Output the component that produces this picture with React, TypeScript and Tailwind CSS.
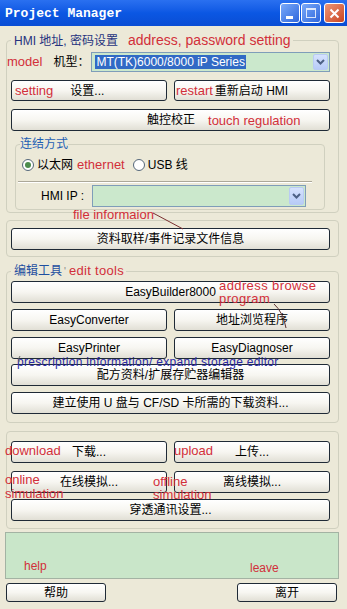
import React from "react";

const FONT = "font-['Liberation_Sans','Noto_Sans_CJK_SC',sans-serif]";
const RED = "text-[#d22f3a]";

function Btn({ children, className = "" }: { children?: React.ReactNode; className?: string }) {
  return (
    <div
      className={`flex items-center rounded-[3px] border border-[#1f2a36] bg-linear-to-b from-[#ffffff] via-[#f7f6f1] to-[#e1dfd5] text-[12px] leading-none text-black ${className}`}
    >
      {children}
    </div>
  );
}

function Chevron() {
  return (
    <svg width="9" height="6" viewBox="0 0 9 6">
      <path d="M1 1 L4.5 4.5 L8 1" fill="none" stroke="#4d6185" strokeWidth="2" />
    </svg>
  );
}

function Combo({ className = "", children }: { className?: string; children?: React.ReactNode }) {
  return (
    <div className={`flex items-stretch border border-[#7f9db9] bg-[#cbe8cc] p-[1px] ${className}`}>
      <div className="flex flex-1 items-center">{children}</div>
      <div className="flex w-[15px] items-center justify-center rounded-[2px] border border-[#b9cbf3] bg-linear-to-b from-[#d6e2fd] to-[#b7cbf7]">
        <Chevron />
      </div>
    </div>
  );
}

function Radio({ checked = false, className = "" }: { checked?: boolean; className?: string }) {
  return (
    <span
      className={`flex h-[12px] w-[12px] shrink-0 items-center justify-center rounded-full border border-[#55677a] bg-white ${className}`}
    >
      {checked && <span className="h-[6px] w-[6px] rounded-full bg-[#4c8c4c]" />}
    </span>
  );
}

function TitleBar() {
  return (
    <div className="flex h-[26px] items-center bg-linear-to-b from-[#2a70f0] via-[#0b57e3] to-[#0a4dd4] pl-[5px] pr-[2px]">
      <span className="font-['Liberation_Mono',monospace] text-[13px] font-bold leading-none text-white">
        Project Manager
      </span>
      <div className="ml-auto flex items-center">
        <div className="flex h-[20px] w-[20px] items-end justify-start rounded-[3px] border border-white bg-linear-to-br from-[#7aa9f9] to-[#2f66dc] pb-[3px] pl-[5px]">
          <span className="h-[3px] w-[7px] bg-white" />
        </div>
        <div className="ml-[1px] flex h-[20px] w-[20px] items-center justify-center rounded-[3px] border border-white bg-linear-to-br from-[#7aa9f9] to-[#2f66dc]">
          <span className="h-[10px] w-[10px] border border-t-[2px] border-white/80" />
        </div>
        <div className="ml-[3px] flex h-[20px] w-[21px] items-center justify-center rounded-[3px] border border-white bg-linear-to-br from-[#ec9576] to-[#c9431f]">
          <svg width="11" height="11" viewBox="0 0 11 11">
            <path d="M1.5 1.5 L9.5 9.5 M9.5 1.5 L1.5 9.5" stroke="white" strokeWidth="2" />
          </svg>
        </div>
      </div>
    </div>
  );
}

export default function App() {
  return (
    <div className={`relative h-[609px] w-[347px] overflow-hidden bg-[#ece9d8] ${FONT}`}>
      <TitleBar />
      <div className="flex flex-col pl-[6px] pr-[8px] pt-[6px]">
        {/* Group 1 */}
        <fieldset className="rounded-[4px] border border-[#d0d0bf] pb-[2px] pl-[4px] pr-[8px]">
          <legend className="pl-[3px] pr-[2px] text-[12px] leading-[16px]">
            <span className="text-[#26337e]">HMI 地址, 密码设置</span>
            <span className={`ml-[10px] text-[14px] ${RED}`}>address, password setting</span>
          </legend>
          <div className="mt-[3px] flex h-[20px] items-center">
            <span className={`-ml-[4px] text-[13px] ${RED}`}>model</span>
            <span className="ml-[11px] text-[12px] text-black">机型：</span>
            <Combo className="ml-[2px] h-[20px] flex-1">
              <span className="ml-[2px] bg-[#316ac5] px-[1px] text-[12px] leading-[14px] text-white">
                MT(TK)6000/8000 iP Series
              </span>
            </Combo>
          </div>
          <div className="mt-[8px] grid h-[21px] grid-cols-2 gap-[7px]">
            <Btn className="justify-start pl-[3px]">
              <span className={`text-[13px] ${RED}`}>setting</span>
              <span className="ml-[17px]">设置...</span>
            </Btn>
            <Btn className="justify-start pl-[1px]">
              <span className={`text-[13px] ${RED}`}>restart</span>
              <span className="ml-[2px]">重新启动 HMI</span>
            </Btn>
          </div>
          <Btn className="mt-[8px] h-[22px] justify-start pl-[135px]">
            <span>触控校正</span>
            <span className={`ml-[13px] text-[13px] ${RED}`}>touch regulation</span>
          </Btn>
          {/* Connection group */}
          <fieldset className="ml-[4px] mr-[5px] mt-[5px] rounded-[4px] border border-[#d0d0bf] pb-[2px] pl-[4px] pr-[4px]">
            <legend className="text-[12px] leading-[16px] text-[#1f5fb4]">连结方式</legend>
            <div className="mt-[5px] flex h-[16px] items-center text-[12px] text-black">
              <Radio checked className="ml-[2px]" />
              <span className="ml-[3px]">以太网</span>
              <span className={`ml-[4px] text-[13px] ${RED}`}>ethernet</span>
              <Radio className="ml-[8px]" />
              <span className="ml-[3px]">USB 线</span>
            </div>
            <div className="-ml-[2px] mr-[8px] mt-[8px] h-[2px] border-b border-t border-b-white border-t-[#aca899]" />
            <div className="mt-[2px] flex h-[22px] items-center">
              <span className="ml-[21px] w-[51px] text-[12px] text-black">HMI IP :</span>
              <Combo className="h-[22px] w-[214px]" />
            </div>
          </fieldset>
        </fieldset>

        {/* File info group */}
        <fieldset className="mt-[7px] rounded-[4px] border border-[#d0d0bf] pb-[6px] pl-[4px] pr-[8px] pt-[7px]">
          <Btn className="h-[22px] justify-center">资料取样/事件记录文件信息</Btn>
        </fieldset>

        {/* Edit tools */}
        <fieldset className="mt-[6px] rounded-[4px] border border-[#d0d0bf] pb-[8px] pl-[4px] pr-[8px]">
          <legend className="pl-[3px] pr-[2px] text-[12px] leading-[16px]">
            <span className="text-[#1f4fa0]">编辑工具</span>
            <span className="ml-[2px] text-[10px] text-[#888]">'</span>
            <span className={`ml-[3px] text-[13px] tracking-[0.3px] ${RED}`}>edit tools</span>
          </legend>
          <Btn className="mt-[1px] h-[22px] justify-center">EasyBuilder8000</Btn>
          <div className="mt-[6px] grid h-[22px] grid-cols-2 gap-[7px]">
            <Btn className="justify-center">EasyConverter</Btn>
            <Btn className="justify-center">地址浏览程序</Btn>
          </div>
          <div className="mt-[6px] grid h-[22px] grid-cols-2 gap-[7px]">
            <Btn className="justify-center">EasyPrinter</Btn>
            <Btn className="justify-center">EasyDiagnoser</Btn>
          </div>
          <Btn className="mt-[5px] h-[22px] justify-center">配方资料/扩展存贮器编辑器</Btn>
          <Btn className="mt-[6px] h-[22px] justify-center">建立使用 U 盘与 CF/SD 卡所需的下载资料...</Btn>
        </fieldset>

        {/* Download group */}
        <fieldset className="mt-[8px] rounded-[4px] border border-[#d0d0bf] pb-[7px] pl-[4px] pr-[8px] pt-[9px]">
          <div className="grid h-[22px] grid-cols-2 gap-[7px]">
            <Btn className="justify-center">下载...</Btn>
            <Btn className="justify-center">上传...</Btn>
          </div>
          <div className="mt-[8px] grid h-[22px] grid-cols-2 gap-[7px]">
            <Btn className="justify-center">在线模拟...</Btn>
            <Btn className="justify-center">离线模拟...</Btn>
          </div>
          <Btn className="mt-[6px] h-[22px] justify-center">穿透通讯设置...</Btn>
        </fieldset>

        {/* Green panel */}
        <div className="-ml-[1px] mt-[3px] h-[47px] border border-[#a3b3a3] bg-[#c9e6c9]" />

        {/* Bottom buttons */}
        <div className="mr-[2px] mt-[4px] flex h-[19px] justify-between">
          <Btn className="w-[100px] justify-center">帮助</Btn>
          <Btn className="w-[100px] justify-center">离开</Btn>
        </div>
      </div>

      {/* Annotation overlays */}
      <span className={`absolute left-[73px] top-[207px] text-[13px] leading-[15px] ${RED}`}>file informaion</span>
      <span className={`absolute left-[219px] top-[279px] w-[100px] text-[13px] leading-[13px] tracking-[0.4px] ${RED}`}>
        address browse program
      </span>
      <span className="absolute left-[17px] top-[355px] text-[12px] leading-[14px] tracking-[0.3px] text-[#2a2aa6]">
        prescription information/ expand storage editor
      </span>
      <span className={`absolute left-[5px] top-[443px] text-[13px] leading-[15px] ${RED}`}>download</span>
      <span className={`absolute left-[174px] top-[443px] text-[13px] leading-[15px] ${RED}`}>upload</span>
      <span className={`absolute left-[5px] top-[473px] text-[13px] leading-[14px] ${RED}`}>
        online
        <br />
        simulation
      </span>
      <span className={`absolute left-[153px] top-[475px] text-[13px] leading-[13px] ${RED}`}>
        offline
        <br />
        simulation
      </span>
      <span className={`absolute left-[24px] top-[559px] text-[12px] leading-[15px] ${RED}`}>help</span>
      <span className={`absolute left-[250px] top-[561px] text-[12px] leading-[15px] ${RED}`}>leave</span>
      <svg className="pointer-events-none absolute left-0 top-0" width="347" height="609">
        <path d="M153 213 L183 229" stroke="#7a3030" strokeWidth="1" fill="none" />
        <path d="M274 304 Q283 312 286 328" stroke="#5a3030" strokeWidth="1" fill="none" />
        <path d="M20 356 Q18 358 19 362" stroke="#666" strokeWidth="1" fill="none" />
      </svg>
    </div>
  );
}
